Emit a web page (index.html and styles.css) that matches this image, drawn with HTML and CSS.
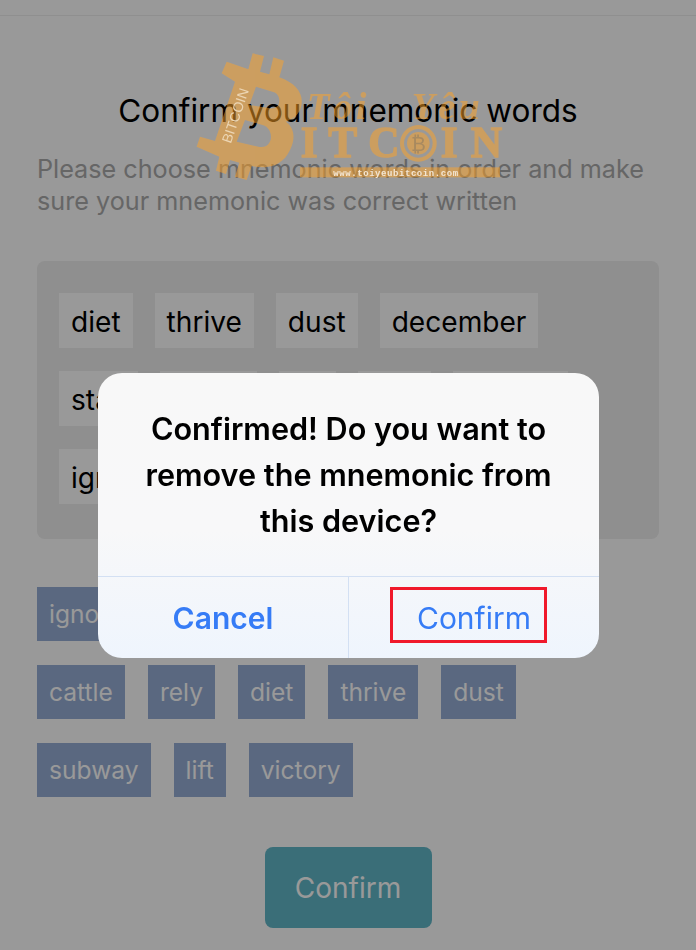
FILE: index.html
```html
<!DOCTYPE html>
<html lang="en">
<head>
    <meta charset="UTF-8">
    <meta name="viewport" content="width=device-width, initial-scale=1.0">
    <title>Confirm your mnemonic words</title>
    <link rel="stylesheet" href="styles.css">
</head>
<body>
    <div class="nav-bar"></div>

    <div class="container">
        <h1>Confirm your mnemonic words</h1>
        <p class="intro">Please choose mnemonic words in order and make sure your mnemonic was correct written</p>

        <div class="picked-box">
            <span class="word">diet</span>
            <span class="word">thrive</span>
            <span class="word">dust</span>
            <span class="word">december</span>
            <span class="word">stay</span>
            <span class="word">cattle</span>
            <span class="word">lift</span>
            <span class="word">rely</span>
            <span class="word">victory</span>
            <span class="word">ignore</span>
            <span class="word">subway</span>
        </div>

        <div class="word-list">
            <div class="word-row">
                <span class="word">ignore</span>
                <span class="word">december</span>
                <span class="word">stay</span>
            </div>
            <div class="word-row">
                <span class="word">cattle</span>
                <span class="word">rely</span>
                <span class="word">diet</span>
                <span class="word">thrive</span>
                <span class="word">dust</span>
            </div>
            <div class="word-row">
                <span class="word">subway</span>
                <span class="word">lift</span>
                <span class="word">victory</span>
            </div>
        </div>

        <button class="confirm-btn">Confirm</button>
    </div>

    <div class="overlay"></div>

    <div class="dialog">
        <p class="dialog-msg">Confirmed! Do you want to remove the mnemonic from this device?</p>
        <div class="dialog-actions">
            <button class="dialog-btn cancel">Cancel</button>
            <button class="dialog-btn ok">Confirm<span class="marker"></span></button>
        </div>
    </div>

    <!-- site watermark stamped on the screenshot -->
    <svg class="watermark" width="340" height="160" viewBox="0 0 1020 480">
        <g class="wm-fill">
            <path fill-rule="evenodd" d="M140 65L205 88L218 40L252 48L240 95L268 103L280 52L312 62L298 112C350 130 375 165 362 205C355 225 340 238 318 245C342 262 348 295 330 330C310 375 265 390 215 378L200 420L165 410L178 368L150 360L138 402L108 392L118 350L50 320L60 290L105 303L165 125L125 100ZM228 140L282 157C305 165 305 210 270 205L208 195ZM195 240L250 256C285 268 280 330 235 320L170 305Z"/>
            <text class="wm-script" x="380" y="238">Tôi</text>
            <text class="wm-script" x="695" y="238">Yêu</text>
            <text class="wm-title" x="362" y="350">I</text>
            <text class="wm-title" x="445" y="350">T</text>
            <text class="wm-title" x="565" y="350">C</text>
            <path fill-rule="evenodd" d="M715 255a55 55 0 1 0 .1 0ZM715 267a43 43 0 1 1 -.1 0Z"/>
            <circle cx="715" cy="310" r="34"/>
            <text class="wm-title" x="782" y="350">I</text>
            <text class="wm-title" x="872" y="350">N</text>
            <rect x="360" y="382" width="600" height="30"/>
        </g>
        <text class="wm-side" transform="translate(152 312) rotate(-71)">BITCOIN</text>
        <text class="wm-btc" x="693" y="334">₿</text>
        <text class="wm-url" x="460" y="408">www.toiyeubitcoin.com</text>
    </svg>
</body>
</html>
```
FILE: styles.css
```css
* {
    box-sizing: border-box;
}

body {
    margin: 0;
    width: 696px;
    height: 950px;
    overflow: hidden;
    background-color: #fff;
    font-family: Inter, "Noto Sans", sans-serif;
    color: #000;
}

.nav-bar {
    height: 16px;
    border-bottom: 1px solid #eee;
}

.container {
    padding: 0 37px;
}

h1 {
    margin: 76px 0 0;
    font-size: 31.5px;
    font-weight: 400;
    line-height: 38px;
    text-align: center;
    white-space: nowrap;
}

.intro {
    margin: 23px 0 0;
    font-size: 25.2px;
    line-height: 32px;
    color: #aaa;
}

.picked-box {
    display: flex;
    flex-wrap: wrap;
    align-content: flex-start;
    gap: 23px 22px;
    height: 278px;
    margin-top: 44px;
    padding: 32px 22px;
    background-color: #eee;
    border-radius: 8px;
}

.word {
    height: 55px;
    padding: 2px 12px 0;
    font-size: 28.1px;
    line-height: 55px;
    background-color: #fff;
}

.word-list {
    display: flex;
    flex-direction: column;
    gap: 24px;
    margin-top: 48px;
}

.word-row {
    display: flex;
    gap: 23px;
}

.word-list .word {
    height: 54px;
    padding-top: 0;
    font-size: 24.6px;
    line-height: 54px;
    color: #fff;
    background-color: #96add5;
}

.confirm-btn {
    display: block;
    width: 167px;
    height: 81px;
    margin: 50px auto 0;
    font-family: inherit;
    font-size: 28px;
    color: #fff;
    background-color: #61b7c8;
    border: none;
    border-radius: 8px;
}

.overlay {
    position: fixed;
    inset: 0;
    background-color: rgba(0, 0, 0, 0.4);
}

.dialog {
    position: fixed;
    top: 373px;
    left: 98px;
    width: 501px;
    height: 285px;
    display: flex;
    flex-direction: column;
    background: linear-gradient(#f8f8f8, #f8f8f9 55%, #eff5fd);
    border-radius: 24px;
    overflow: hidden;
}

.dialog-msg {
    flex: 1;
    margin: 0;
    padding: 33px 30px 0;
    font-size: 30.6px;
    font-weight: 600;
    line-height: 46px;
    text-align: center;
}

.dialog-actions {
    display: flex;
    height: 82px;
    border-top: 1px solid #d3e0f3;
}

.dialog-btn {
    flex: 1;
    padding: 0;
    font-family: inherit;
    font-size: 30px;
    color: #367cf6;
    background: none;
    border: none;
}

.dialog-btn.cancel {
    font-weight: 600;
    border-right: 1px solid #d3e0f3;
}

.dialog-btn.ok {
    position: relative;
}

/* red annotation box drawn over the button */
.marker {
    position: absolute;
    top: 10px;
    left: 41px;
    width: 157px;
    height: 56px;
    border: 3px solid #f0192b;
}

.watermark {
    position: fixed;
    top: 40px;
    left: 180px;
}

.wm-fill {
    fill: #ffa327;
    opacity: 0.5;
}

.wm-script {
    font-family: "Liberation Serif", serif;
    font-size: 112px;
    font-style: italic;
    font-weight: 700;
    letter-spacing: 12px;
}

.wm-title {
    font-family: "Liberation Serif", serif;
    font-size: 130px;
    font-weight: 700;
    stroke: #ffa327;
    stroke-width: 4px;
}

.wm-side {
    font-family: "Liberation Sans", sans-serif;
    font-size: 42px;
    fill: #ecd6b4;
}

.wm-btc {
    font-family: "DejaVu Sans", sans-serif;
    font-size: 60px;
    fill: #a88a60;
}

.wm-url {
    font-family: "Liberation Mono", monospace;
    font-size: 27px;
    font-weight: 700;
    letter-spacing: 1.7px;
    fill: #f3e6d3;
}
```
